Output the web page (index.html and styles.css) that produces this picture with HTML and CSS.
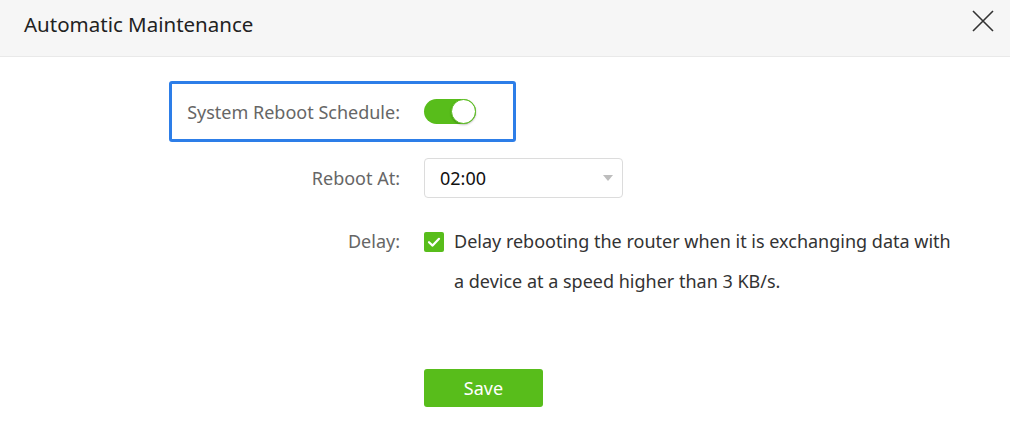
FILE: index.html
```html
<!DOCTYPE html>
<html lang="en">
<head>
<meta charset="utf-8">
<title>Automatic Maintenance</title>
<link rel="stylesheet" href="styles.css">
</head>
<body>
<div class="dialog">
  <header class="dialog-header">
    <h1 class="dialog-title">Automatic Maintenance</h1>
    <button class="close-btn" type="button" aria-label="Close">
      <svg width="22" height="22" viewBox="0 0 22 22"><path d="M1 1 L21 21 M21 1 L1 21" stroke="#333" stroke-width="1.6" fill="none"/></svg>
    </button>
  </header>
  <main class="dialog-body">
    <div class="row row-highlight">
      <label class="row-label">System Reboot Schedule:</label>
      <div class="row-control">
        <span class="switch"><span class="switch-knob"></span></span>
      </div>
    </div>
    <div class="row row-select">
      <label class="row-label">Reboot At:</label>
      <div class="row-control">
        <div class="select">
          <span class="select-value">02:00</span>
          <span class="select-arrow"></span>
        </div>
      </div>
    </div>
    <div class="row row-delay">
      <label class="row-label">Delay:</label>
      <div class="row-control delay-control">
        <span class="checkbox">
          <svg width="20" height="20" viewBox="0 0 20 20"><path d="M5 10.2 L8.6 13.6 L15 6.8" stroke="#fff" stroke-width="2.2" fill="none" stroke-linecap="round" stroke-linejoin="round"/></svg>
        </span>
        <p class="delay-text">Delay rebooting the router when it is exchanging data with a device at a speed higher than 3 KB/s.</p>
      </div>
    </div>
    <div class="row row-actions">
      <span class="row-label"></span>
      <div class="row-control">
        <button class="save-btn" type="button">Save</button>
      </div>
    </div>
  </main>
</div>
</body>
</html>
```
FILE: styles.css
```css
* { box-sizing: border-box; }
html, body { margin: 0; padding: 0; background: #fff; }
body {
  font-family: "Noto Sans", "Liberation Sans", sans-serif;
  color: #333;
}
.dialog { width: 1010px; height: 434px; overflow: hidden; }
.dialog-header {
  height: 57px;
  background: #f6f6f6;
  border-bottom: 1px solid #e9e9e9;
  display: flex;
  align-items: center;
  justify-content: space-between;
  padding: 0 16px 0 24px;
}
.dialog-title {
  margin: 0;
  font-size: 20.5px;
  font-weight: normal;
  color: #222;
  line-height: 1;
  padding-bottom: 8px;
}
.close-btn {
  border: 0;
  background: none;
  padding: 0;
  width: 22px;
  height: 22px;
  margin-bottom: 14px;
  display: flex;
}
.dialog-body { padding-top: 24px; }
.row {
  display: flex;
  align-items: center;
  margin-left: 169px;
  border: 3px solid transparent;
  width: 800px;
}
.row-highlight {
  width: 347px;
  height: 61px;
  border-color: #2d7ee8;
  border-radius: 3px;
}
.row-label {
  width: 228px;
  flex: none;
  text-align: right;
  font-size: 18px;
  color: #666;
  margin-right: 24px;
}
.row-control { display: flex; align-items: center; }
.switch {
  width: 52px;
  height: 25px;
  border-radius: 13px;
  background: #58bd1b;
  position: relative;
  display: block;
}
.switch-knob {
  position: absolute;
  right: 0;
  top: 0;
  width: 25px;
  height: 25px;
  border-radius: 50%;
  background: #fff;
  border: 1px solid #58bd1b;
  box-shadow: 0 1px 2px rgba(0,0,0,0.25);
}
.row-select { margin-top: 13px; }
.select {
  width: 199px;
  height: 40px;
  border: 1px solid #dcdcdc;
  border-radius: 4px;
  display: flex;
  align-items: center;
  justify-content: space-between;
  padding: 0 9px 0 15px;
  font-size: 18px;
  color: #111;
}
.select-arrow {
  width: 0;
  height: 0;
  border-left: 5px solid transparent;
  border-right: 5px solid transparent;
  border-top: 6px solid #bdbdbd;
}
.row-delay { margin-top: 17px; align-items: flex-start; }
.row-delay .row-label { line-height: 40px; }
.delay-control { align-items: flex-start; }
.checkbox {
  width: 20px;
  height: 20px;
  flex: none;
  background: #58bd1b;
  border-radius: 2px;
  margin-top: 11px;
  display: flex;
}
.delay-text {
  margin: 0 0 0 10px;
  width: 505px;
  font-size: 18px;
  line-height: 40px;
  color: #333;
}
.row-actions { margin-top: 62px; }
.save-btn {
  width: 119px;
  height: 38px;
  border: 0;
  border-radius: 3px;
  background: #58bd1b;
  color: #fff;
  font-family: inherit;
  font-size: 18px;
  padding: 0;
}
```
